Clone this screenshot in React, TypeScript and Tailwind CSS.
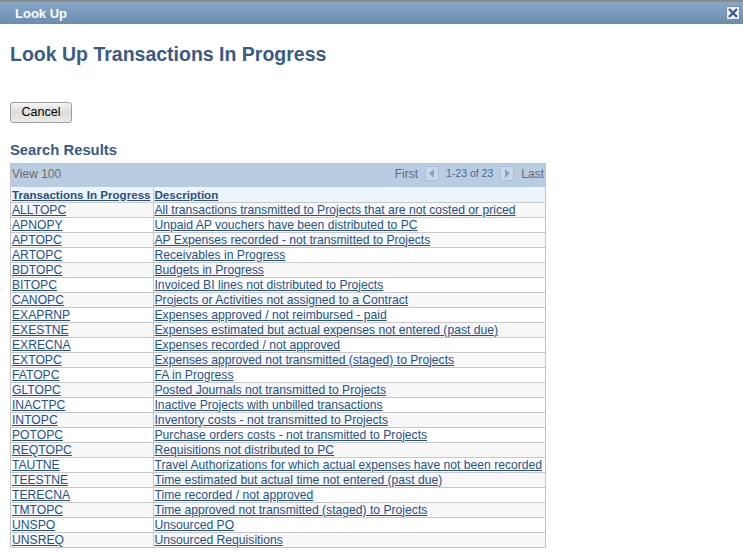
const rows: [string, string][] = [
  ["ALLTOPC", "All transactions transmitted to Projects that are not costed or priced"],
  ["APNOPY", "Unpaid AP vouchers have been distributed to PC"],
  ["APTOPC", "AP Expenses recorded - not transmitted to Projects"],
  ["ARTOPC", "Receivables in Progress"],
  ["BDTOPC", "Budgets in Progress"],
  ["BITOPC", "Invoiced BI lines not distributed to Projects"],
  ["CANOPC", "Projects or Activities not assigned to a Contract"],
  ["EXAPRNP", "Expenses approved / not reimbursed - paid"],
  ["EXESTNE", "Expenses estimated but actual expenses not entered (past due)"],
  ["EXRECNA", "Expenses recorded / not approved"],
  ["EXTOPC", "Expenses approved not transmitted (staged) to Projects"],
  ["FATOPC", "FA in Progress"],
  ["GLTOPC", "Posted Journals not transmitted to Projects"],
  ["INACTPC", "Inactive Projects with unbilled transactions"],
  ["INTOPC", "Inventory costs - not transmitted to Projects"],
  ["POTOPC", "Purchase orders costs - not transmitted to Projects"],
  ["REQTOPC", "Requisitions not distributed to PC"],
  ["TAUTNE", "Travel Authorizations for which actual expenses have not been recorded"],
  ["TEESTNE", "Time estimated but actual time not entered (past due)"],
  ["TERECNA", "Time recorded / not approved"],
  ["TMTOPC", "Time approved not transmitted (staged) to Projects"],
  ["UNSPO", "Unsourced PO"],
  ["UNSREQ", "Unsourced Requisitions"],
];

function NavArrow({ dir }: { dir: "left" | "right" }) {
  return (
    <span className="inline-flex items-center justify-center w-[14px] h-[15px] bg-[#c9d9ea] border border-[#a9bfd6]">
      <svg width="6" height="9" viewBox="0 0 6 9">
        {dir === "left" ? (
          <polygon points="5,0 5,9 0,4.5" fill="#8aa6c4" />
        ) : (
          <polygon points="1,0 1,9 6,4.5" fill="#8aa6c4" />
        )}
      </svg>
    </span>
  );
}

export default function App() {
  return (
    <div className="w-[743px] h-[552px] overflow-hidden bg-white font-['Liberation_Sans',Arial,sans-serif]">
      {/* Title bar */}
      <div className="h-[24px] border-t-2 border-[#8a8a8a] bg-gradient-to-b from-[#86a7c5] to-[#6a8db2] flex items-center justify-between pl-[15px] pr-[3px]">
        <span className="text-white font-bold text-[13px] leading-none">Look Up</span>
        <span className="w-[14px] h-[14px] bg-[#f0f2f6] border border-[#7d8da3] flex items-center justify-center">
          <svg width="10" height="10" viewBox="0 0 10 10">
            <path d="M1 1 L9 9 M9 1 L1 9" stroke="#3f5796" strokeWidth="2.4" />
          </svg>
        </span>
      </div>

      <div className="pl-[10px]">
        <h1 className="mt-[19px] text-[19.5px] leading-[22px] font-bold text-[#3a5a86]">
          Look Up Transactions In Progress
        </h1>

        <button className="mt-[37px] w-[62px] h-[21px] rounded-[3px] border border-[#a0a0a0] bg-gradient-to-b from-[#f4f4f4] via-[#dcdcdc] to-[#ececec] text-[12.5px] text-black leading-none">
          Cancel
        </button>

        <h2 className="mt-[18px] text-[14.8px] leading-[18px] font-bold text-[#3a5a86]">Search Results</h2>

        <div className="mt-[4px] w-[536px] border border-[#c4c4c4] border-b-0">
          <div className="h-[23px] bg-[#b8cde2] flex items-center justify-between px-[1px] pb-[4px] text-[#6b6b6b]">
            <span className="text-[12px]">View 100</span>
            <span className="flex items-center text-[12px]">
              <span className="mr-[7px]">First</span>
              <NavArrow dir="left" />
              <span className="text-[10.5px] text-[#4a6a94] mx-[7px]">1-23 of 23</span>
              <NavArrow dir="right" />
              <span className="ml-[7px]">Last</span>
            </span>
          </div>
          <table className="w-full table-fixed border-collapse text-[12.15px] leading-[14px]">
            <colgroup>
              <col className="w-[142px]" />
              <col />
            </colgroup>
            <thead>
              <tr className="bg-[#ecf4fc]">
                <th className="text-left font-bold px-[1px] border-r border-b border-[#c8c8c8] h-[15px] text-[11.6px]">
                  <a className="underline text-[#2c4e80] whitespace-nowrap">Transactions In Progress</a>
                </th>
                <th className="text-left font-bold px-[1px] border-b border-[#c8c8c8] text-[11.6px]">
                  <a className="underline text-[#2c4e80]">Description</a>
                </th>
              </tr>
            </thead>
            <tbody>
              {rows.map(([code, desc], i) => (
                <tr key={code} className={i % 2 === 0 ? "bg-[#f7f7f7]" : "bg-white"}>
                  <td className="px-[1px] h-[15px] border-r border-b border-[#c8c8c8]">
                    <a className="underline text-[#24508c]">{code}</a>
                  </td>
                  <td className="px-[1px] border-b border-[#c8c8c8] whitespace-nowrap overflow-visible">
                    <a className="underline text-[#24508c]">{desc}</a>
                  </td>
                </tr>
              ))}
            </tbody>
          </table>
        </div>
      </div>
    </div>
  );
}
